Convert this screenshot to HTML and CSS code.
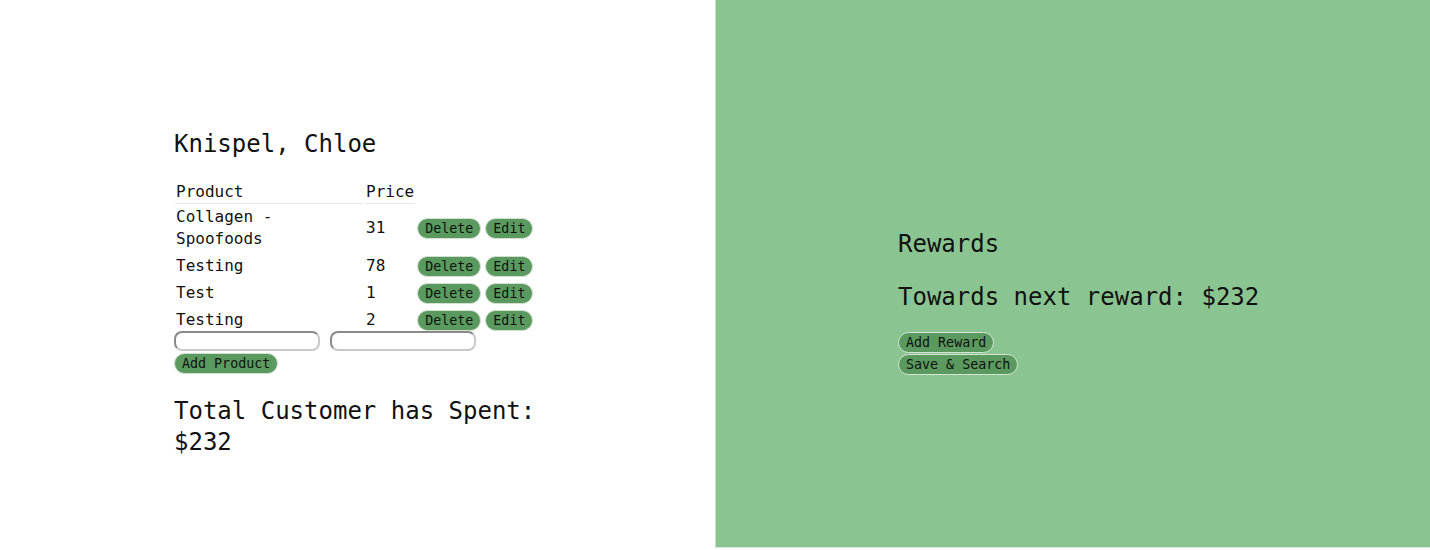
FILE: index.html
```html
<!DOCTYPE html>
<html lang="en">
<head>
<meta charset="utf-8">
<title>Customer</title>
<link rel="stylesheet" href="styles.css">
</head>
<body>
<main class="page">
  <section class="customer">
    <h1 class="name">Knispel, Chloe</h1>
    <table class="products">
      <thead>
        <tr><th class="col-product">Product</th><th class="col-price">Price</th><th class="col-actions"></th></tr>
      </thead>
      <tbody>
        <tr><td>Collagen - Spoofoods</td><td>31</td><td class="actions"><button class="pill">Delete</button><button class="pill">Edit</button></td></tr>
        <tr><td>Testing</td><td>78</td><td class="actions"><button class="pill">Delete</button><button class="pill">Edit</button></td></tr>
        <tr><td>Test</td><td>1</td><td class="actions"><button class="pill">Delete</button><button class="pill">Edit</button></td></tr>
        <tr><td>Testing</td><td>2</td><td class="actions"><button class="pill">Delete</button><button class="pill">Edit</button></td></tr>
      </tbody>
    </table>
    <form class="add-form">
      <div class="inputs">
        <input class="field" type="text">
        <input class="field" type="text">
      </div>
      <button type="button" class="pill">Add Product</button>
    </form>
    <h2 class="total">Total Customer has Spent: $232</h2>
  </section>
  <section class="rewards">
    <h2 class="heading">Rewards</h2>
    <h2 class="heading towards">Towards next reward: $232</h2>
    <div class="reward-actions">
      <button class="pill">Add Reward</button>
      <button class="pill">Save &amp; Search</button>
    </div>
  </section>
</main>
</body>
</html>
```
FILE: styles.css
```css
* { box-sizing: border-box; }

body {
  margin: 0;
  background: #ffffff;
  font-family: "DejaVu Sans Mono", "Liberation Mono", monospace;
  color: #111;
}

.page {
  display: grid;
  grid-template-columns: 715px 1fr;
  height: 548px;
}

.customer {
  padding: 130px 0 0 174px;
}

.customer > * {
  width: 372px;
}

.name,
.total,
.heading {
  margin: 0;
  font-size: 24px;
  font-weight: normal;
  line-height: 28px;
}

.name {
  margin-bottom: 21px;
}

.products {
  border-collapse: separate;
  border-spacing: 2px 0;
  margin-left: -1px;
  width: auto;
  font-size: 16px;
  line-height: 22px;
}

.products th {
  font-weight: normal;
  text-align: left;
  padding: 2px 1px 0 1px;
  border-bottom: 1px solid #e8e8e8;
}

.products th.col-actions {
  border-bottom: none;
}

.col-product { width: 188px; }
.col-price { width: 50px; }

.products td {
  padding: 2px 1px 3px 1px;
  vertical-align: middle;
}

.products tbody tr:last-child td {
  padding-bottom: 0;
}

.products td.actions {
  padding-left: 0;
  white-space: nowrap;
}

.pill {
  font-family: "DejaVu Sans Mono", "Liberation Mono", monospace;
  font-size: 13.33px;
  line-height: 15px;
  padding: 2px 7px;
  border: 1px solid #d3dfd3;
  border-radius: 11px;
  background: #5a9a5e;
  color: #111;
  margin: 0;
}

.actions .pill {
  vertical-align: middle;
  margin-right: 4px;
}

.add-form {
  display: flex;
  flex-direction: column;
  align-items: flex-start;
  gap: 2px;
  margin-top: 0;
}

.inputs {
  display: flex;
  gap: 10px;
}

.field {
  width: 146px;
  height: 20px;
  border-radius: 8px;
  border: 2px solid #c8c8c8;
  border-top-color: #8a8a8a;
  border-left-color: #8a8a8a;
  background: #fff;
  padding: 0 4px;
  margin: 0;
}

.total {
  margin-top: 22px;
  line-height: 31px;
}

.rewards {
  background: #8ac591;
  border-left: 1px solid #c3e2c7;
  border-bottom: 1px solid #d2eed5;
  padding: 230px 0 0 182px;
}

.towards {
  margin-top: 25px;
}

.reward-actions {
  display: flex;
  flex-direction: column;
  align-items: flex-start;
  gap: 1px;
  margin-top: 21px;
}

.reward-actions .pill {
  border-color: #d6e4d6;
}
```
